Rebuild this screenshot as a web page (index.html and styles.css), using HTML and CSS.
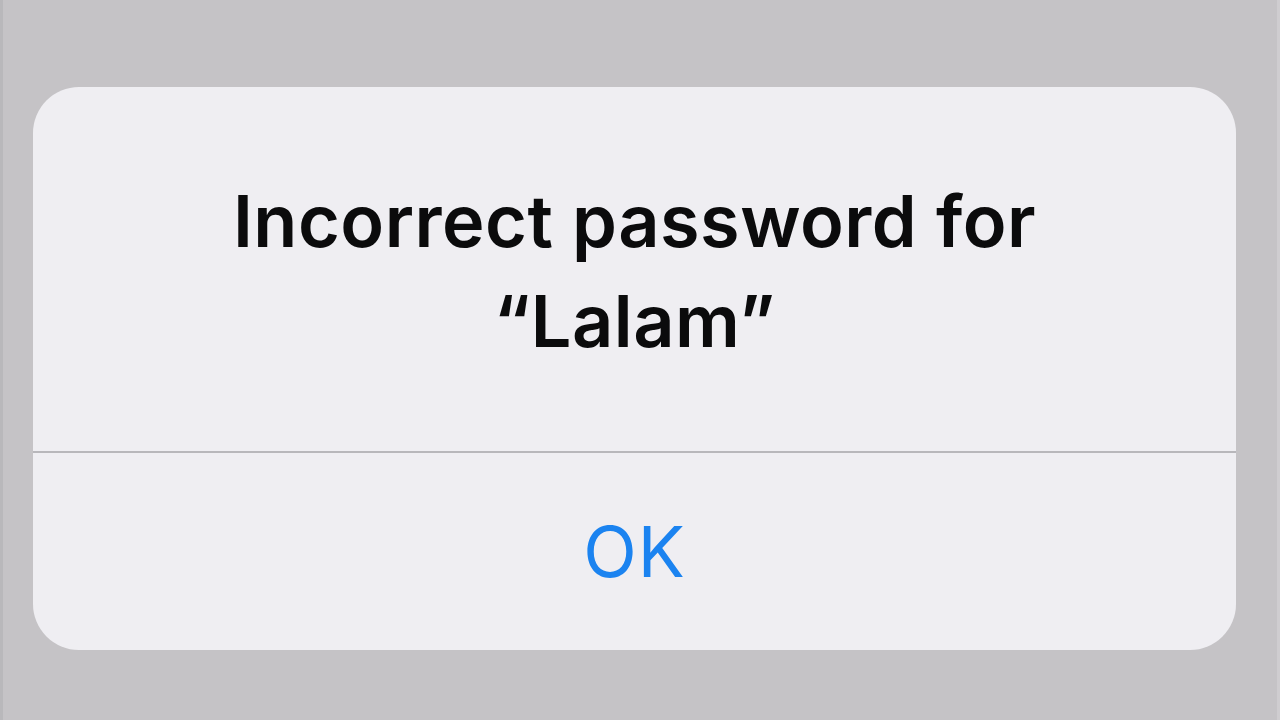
FILE: index.html
```html
<!DOCTYPE html>
<html>
  <head>
    <title>Incorrect password</title>
    <link rel="stylesheet" href="styles.css">
  </head>
  <body>
    <div class="screen">
      <div class="alert">
        <div class="alert-body">
          <h1 class="alert-title">Incorrect password for<br>“Lalam”</h1>
        </div>
        <button class="alert-button">OK</button>
      </div>
    </div>
  </body>
</html>
```

FILE: styles.css
```css
* {
  box-sizing: border-box;
  margin: 0;
  padding: 0;
}

body {
  background-color: #c5c3c6;
  font-family: Inter, "Noto Sans", "Liberation Sans", sans-serif;
  width: 1280px;
  height: 720px;
  overflow: hidden;
}

.screen {
  height: 720px;
  padding: 87px 44px 0 33px;
  border-left: 3px solid #b9b8bb;
  border-right: 3px solid #cfcdd0;
}

/* Tarjeta de alerta */
.alert {
  width: 1203px;
  height: 563px;
  margin-left: -3px;
  background-color: #efeef2;
  border-radius: 46px;
  display: flex;
  flex-direction: column;
  overflow: hidden;
}

.alert-body {
  height: 366px;
  padding-top: 84px;
  border-bottom: 2px solid #b8b7bb;
}

.alert-title {
  text-align: center;
  font-size: 72px;
  font-weight: 600;
  line-height: 100px;
  letter-spacing: 0.5px;
  color: #0b0b0c;
}

.alert-button {
  flex: 1;
  border: none;
  background: none;
  font-family: inherit;
  font-size: 70px;
  font-weight: 400;
  line-height: 195px;
  letter-spacing: 1px;
  color: #1b83f0;
  cursor: pointer;
}
```
